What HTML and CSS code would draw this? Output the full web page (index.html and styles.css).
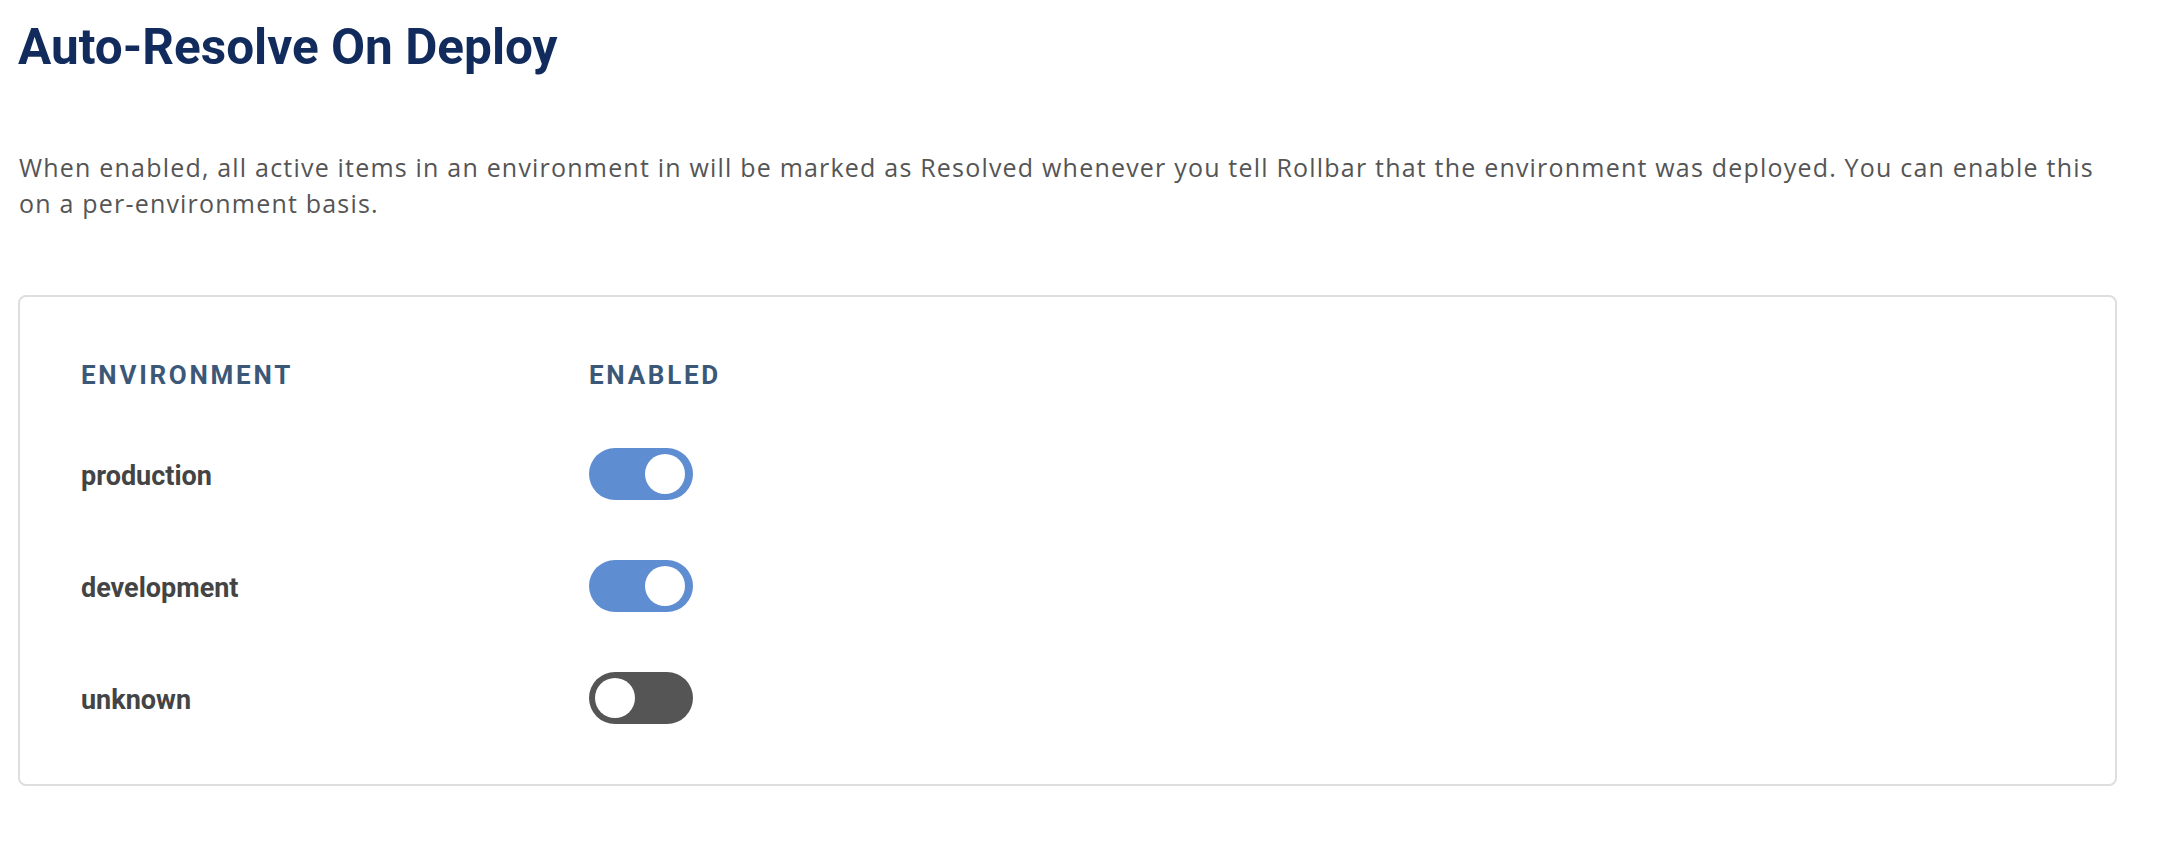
FILE: index.html
```html
<!DOCTYPE html>
<html>
<head>
<meta charset="utf-8">
<link rel="stylesheet" href="styles.css">
</head>
<body>
<div class="page">
  <h1 class="title">Auto-Resolve On Deploy</h1>
  <p class="desc">When enabled, all active items in an environment in will be marked as Resolved whenever you tell Rollbar that the environment was deployed. You can enable this on a per-environment basis.</p>
  <div class="card">
    <div class="row head">
      <div class="col-env">ENVIRONMENT</div>
      <div class="col-en">ENABLED</div>
    </div>
    <div class="row item">
      <div class="col-env name">production</div>
      <div class="col-en"><span class="toggle on"><span class="knob"></span></span></div>
    </div>
    <div class="row item">
      <div class="col-env name">development</div>
      <div class="col-en"><span class="toggle on"><span class="knob"></span></span></div>
    </div>
    <div class="row item">
      <div class="col-env name">unknown</div>
      <div class="col-en"><span class="toggle off"><span class="knob"></span></span></div>
    </div>
  </div>
</div>
</body>
</html>
```
FILE: styles.css
```css
html, body {
  margin: 0;
  padding: 0;
  background: #ffffff;
}
.page {
  padding: 19px 57px 0 18px;
  font-family: Roboto, "Liberation Sans", sans-serif;
}
.title {
  margin: 0;
  font-size: 49.5px;
  line-height: 56px;
  font-weight: 700;
  color: #112c5c;
}
.desc {
  margin: 74px 0 0 1px;
  font-family: "Open Sans", "Liberation Sans", sans-serif;
  font-size: 25px;
  line-height: 36px;
  letter-spacing: 1.2px;
  color: #555555;
}
.card {
  margin-top: 74px;
  border: 2px solid #dedede;
  border-radius: 8px;
  padding: 50px 62px 30px 61px;
}
.row {
  display: flex;
  align-items: center;
}
.col-env {
  width: 508px;
  flex: none;
}
.head {
  height: 56px;
  margin-bottom: 15px;
  font-size: 26px;
  font-weight: 700;
  letter-spacing: 0.105em;
  color: #3c5878;
}
.item {
  height: 112px;
}
.name {
  padding-top: 4px;
  font-size: 27px;
  font-weight: 700;
  color: #444444;
}
.toggle {
  display: block;
  position: relative;
  width: 104px;
  height: 52px;
  border-radius: 26px;
  background: #5e8dd1;
}
.toggle.off {
  background: #555555;
}
.knob {
  position: absolute;
  top: 6px;
  left: 6px;
  width: 40px;
  height: 40px;
  border-radius: 50%;
  background: #ffffff;
}
.toggle.on .knob {
  left: 56px;
}
```
